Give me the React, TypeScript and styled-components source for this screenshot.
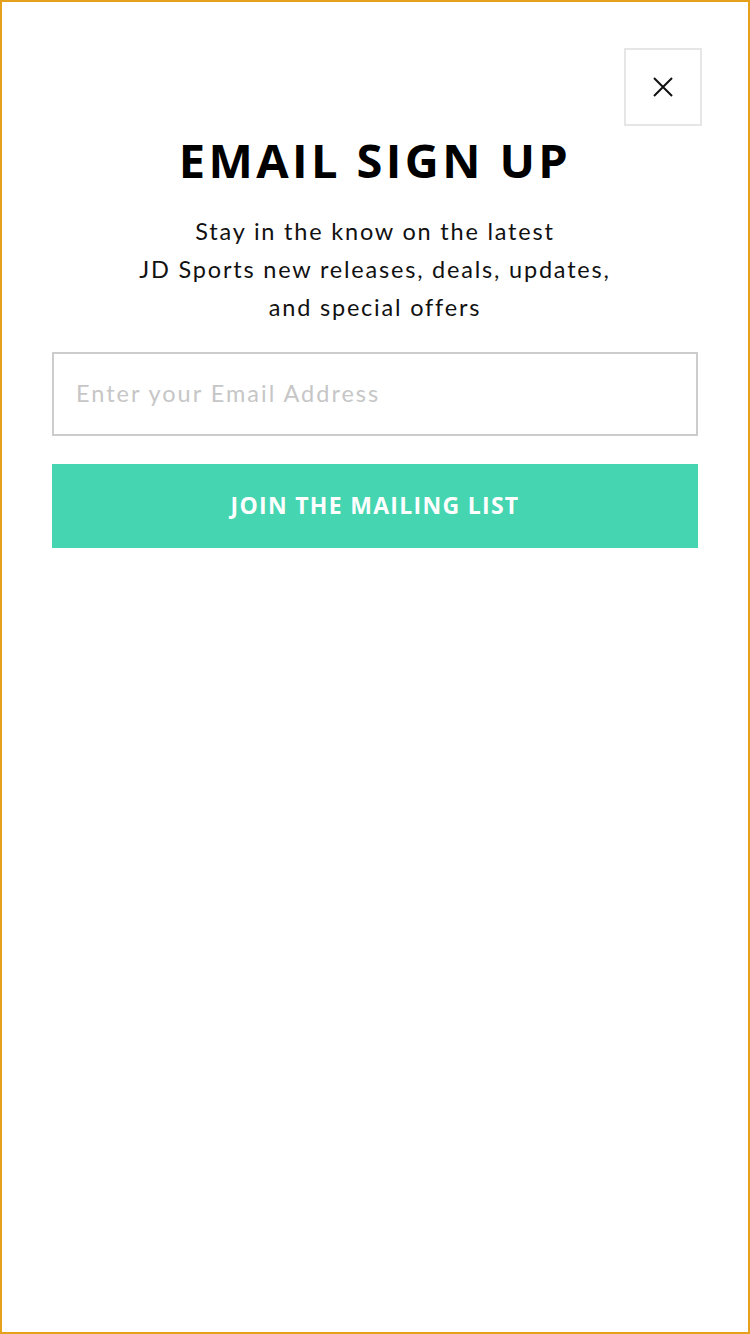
import React from "react";
import styled, { createGlobalStyle } from "styled-components";

const Global = createGlobalStyle`
  html, body { margin: 0; padding: 0; background: #fff; }
  * { box-sizing: border-box; }
`;

const Frame = styled.div`
  width: 750px;
  height: 1334px;
  border: 2px solid #e5a11c;
  background: #fff;
  font-family: "Open Sans", "Liberation Sans", sans-serif;
  display: flex;
  flex-direction: column;
  padding: 46px 50px 0 50px;
`;

const TopBar = styled.div`
  display: flex;
  justify-content: flex-end;
  margin-right: -4px;
`;

const CloseButton = styled.button`
  width: 78px;
  height: 78px;
  border: 2px solid #e6e6e6;
  background: #fff;
  display: flex;
  align-items: center;
  justify-content: center;
  padding: 0;
  cursor: pointer;
`;

const Title = styled.h1`
  margin: 4px 0 0;
  text-align: center;
  font-family: "Open Sans", "Liberation Sans", sans-serif;
  font-weight: 700;
  font-size: 47px;
  line-height: 60px;
  letter-spacing: 3.4px;
  color: #000;
`;

const Subtitle = styled.p`
  margin: 22px 0 0;
  text-align: center;
  font-family: "Lato", "Liberation Sans", sans-serif;
  font-weight: 400;
  font-size: 23.5px;
  line-height: 38px;
  letter-spacing: 1.8px;
  color: #111;
`;

const Form = styled.form`
  display: flex;
  flex-direction: column;
  gap: 28px;
  margin-top: 26px;
`;

const EmailInput = styled.input`
  width: 100%;
  height: 84px;
  border: 2px solid #cccccc;
  padding: 0 22px 3px;
  font-family: "Lato", "Liberation Sans", sans-serif;
  font-size: 23.5px;
  letter-spacing: 2px;
  color: #111;
  outline: none;
  background: #fff;
  &::placeholder { color: #c6c6c6; }
`;

const SubmitButton = styled.button`
  width: 100%;
  height: 84px;
  border: none;
  background: #45d5b1;
  color: #fff;
  font-family: "Open Sans", "Liberation Sans", sans-serif;
  font-weight: 700;
  font-size: 23px;
  letter-spacing: 1.3px;
  padding: 0 0 2px;
  cursor: pointer;
`;

export default function App() {
  return (
    <>
      <Global />
      <Frame>
        <TopBar>
          <CloseButton aria-label="Close">
            <svg width="20" height="20" viewBox="0 0 20 20">
              <path d="M1 1 L19 19 M19 1 L1 19" stroke="#111" strokeWidth="2" fill="none" />
            </svg>
          </CloseButton>
        </TopBar>
        <Title>EMAIL SIGN UP</Title>
        <Subtitle>
          Stay in the know on the latest
          <br />
          JD Sports new releases, deals, updates,
          <br />
          and special offers
        </Subtitle>
        <Form onSubmit={(e) => e.preventDefault()}>
          <EmailInput type="email" placeholder="Enter your Email Address" />
          <SubmitButton type="submit">JOIN THE MAILING LIST</SubmitButton>
        </Form>
      </Frame>
    </>
  );
}
